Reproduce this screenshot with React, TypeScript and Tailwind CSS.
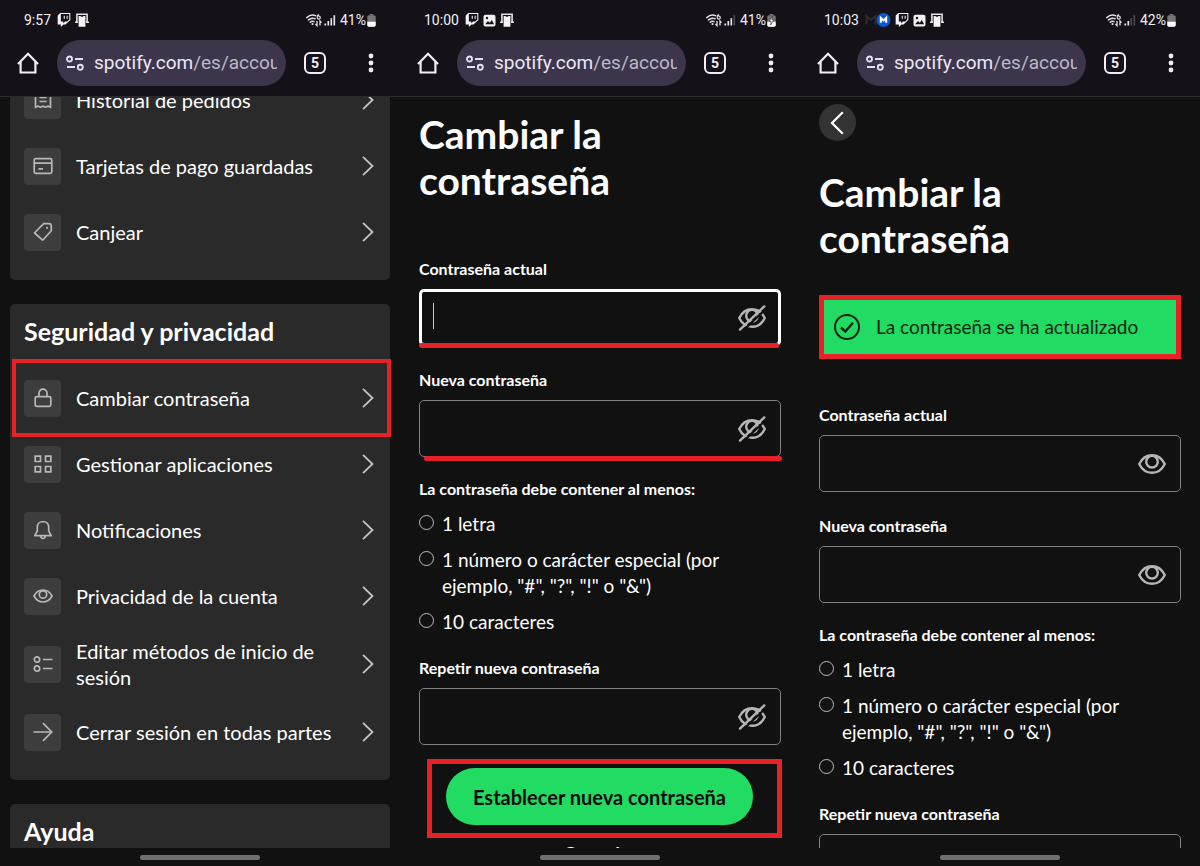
import { useId } from "react";
import type { ReactNode } from "react";
import { FaTwitch } from "react-icons/fa6";

/* ---------- status bar ---------- */

function FrameIcon() {
  return (
    <svg viewBox="0 0 14 14" className="h-3.5 w-3.5" aria-hidden="true">
      <path d="M1.900 9.500V1.200h10.200v8.300M0 9.200h3M11 9.200h3" fill="none" stroke="#e4e2e8" strokeWidth="1.600" />
      <path d="M3.600 3h1.800c.3 1 2.900 1 3.200 0h1.800v10.800H3.600z" fill="#f6f4f8" />
    </svg>
  );
}

function PictureIcon() {
  return (
    <svg viewBox="0 0 13 13" className="h-[13px] w-[13px]" aria-hidden="true">
      <rect x=".5" y=".8" width="12" height="11.600" rx="2" fill="#f2f0f4" />
      <path d="M2.200 10.200 5 6.900l1.800 1.800 2-2.600 2.300 4.100z" fill="#141118" />
      <circle cx="4" cy="4" r="1.200" fill="#141118" />
    </svg>
  );
}

function SignalIcons({ bars }: { bars: number }) {
  return (
    <svg viewBox="0 0 30 14" className="h-3.5 w-[30px]" fill="none" aria-hidden="true">
      <g stroke="#e4e2e8" strokeWidth="1.500" strokeLinecap="round">
        <path d="M.800 4.600C3.600 1.900 7.300 1.600 9.600 2.600" />
        <path d="M2.400 7C4.400 5.200 7 4.900 9 5.700" />
        <path d="M4.200 9.200C5.300 8.200 6.800 8 8 8.600" />
      </g>
      <circle cx="6.500" cy="11" r="1.100" fill="#e4e2e8" />
      <path d="M13 1.600c-1.400.2-2 1.300-1.700 2.700a1.500 1.500 0 1 0 .9-1.100" stroke="#e4e2e8" strokeWidth="1.200" />
      <path d="M11 8v4.600l-1.500-1.600M14 12.600V8l1.500 1.600" stroke="#e4e2e8" strokeWidth="1.300" />
      <g strokeWidth="1.700">
        <path d="M19.300 12.500v-2" stroke="#e4e2e8" />
        <path d="M22.300 12.500V8" stroke="#e4e2e8" />
        <path d="M25.300 12.500V5.200" stroke={bars > 2 ? "#e4e2e8" : "#4a4750"} />
        <path d="M28.300 12.500V2.200" stroke={bars > 3 ? "#e4e2e8" : "#4a4750"} />
      </g>
    </svg>
  );
}

function Battery({ charging }: { charging: boolean }) {
  return (
    <svg viewBox="0 0 9 13" className="h-[13px] w-[9px]" aria-hidden="true">
      <path d="M2.800 0h3.400v1.400H2.800z" fill="#77747c" />
      <rect x=".3" y="1.200" width="8.400" height="11.500" rx="1.600" fill="#77747c" />
      <path d="M.3 7.700h8.400v3.400c0 .9-.7 1.600-1.600 1.600H1.900c-.9 0-1.600-.7-1.600-1.600z" fill="#fff" />
      {charging && <path d="M5.200 2.200 2.200 7.400h1.900l-.5 3.600 3.200-5.200H4.900z" fill="#fff" stroke="#2a2730" strokeWidth=".6" />}
    </svg>
  );
}

function MailIcon() {
  return (
    <svg viewBox="0 0 26 14" className="h-3.5 w-[26px]" aria-hidden="true">
      <path d="M1.500 11.500V3l4.500 4 4.500-4v8.500" fill="none" stroke="#2e2a34" strokeWidth="2" />
      <circle cx="18.500" cy="7" r="7" fill="#0b57d8" />
      <path d="M15.800 9.800V4.900l2.700 2.500 2.700-2.500v4.900" fill="none" stroke="#fff" strokeWidth="2" />
    </svg>
  );
}

/* ---------- browser toolbar ---------- */

function HomeIcon() {
  return (
    <svg viewBox="0 0 22 22" className="h-[22px] w-[22px]" fill="none" stroke="#f1eef5" strokeWidth="2.200" aria-hidden="true">
      <path d="M1 12 11 1.800 21 12" />
      <path d="M3.600 9.700v10.800h14.800V9.700" />
    </svg>
  );
}

function TuneIcon() {
  return (
    <svg viewBox="0 0 18 16" className="h-4 w-[18px] shrink-0" fill="none" stroke="#e4dfee" strokeWidth="1.900" aria-hidden="true">
      <circle cx="3.500" cy="4" r="2.500" />
      <path d="M9 4h8M1 12h8" />
      <circle cx="14.300" cy="12.200" r="2.500" />
    </svg>
  );
}

type PhoneProps = {
  time: string;
  battery: string;
  bars: number;
  charging?: boolean;
  notifications: ReactNode;
  children: ReactNode;
};

function Phone({ time, battery, bars, charging = false, notifications, children }: PhoneProps) {
  return (
    <section className="flex h-full min-w-0 flex-1 flex-col bg-[#111111]">
      <header className="shrink-0 border-b border-[#2c2a30] bg-[#141118] pb-2.5">
        <div className="flex h-10 items-center justify-between px-6 font-[Roboto,sans-serif] text-sm text-[#f2f0f4]">
          <div className="flex items-center gap-1">
            <span className="mr-0.5">{time}</span>
            {notifications}
          </div>
          <div className="flex items-center gap-1">
            <SignalIcons bars={bars} />
            <span className="flex items-center gap-px">
              {battery}
              <Battery charging={charging} />
            </span>
          </div>
        </div>
        <div className="flex items-center pr-[26px] pl-[17px]">
          <button type="button" aria-label="Inicio">
            <HomeIcon />
          </button>
          <button
            type="button"
            className="ml-[18px] flex h-[46px] min-w-0 flex-1 items-center gap-2.5 rounded-full bg-[#3d364b] pr-[9px] pl-[9px] text-left"
          >
            <TuneIcon />
            <span className="min-w-0 flex-1 overflow-hidden font-[Roboto,sans-serif] text-[19px] whitespace-nowrap text-[#ece7f5]">
              spotify.com<span className="text-[#bdb6ca]">/es/accou</span>
            </span>
          </button>
          <button
            type="button"
            aria-label="Pestañas"
            className="ml-[18px] flex h-[22px] w-[22px] items-center justify-center rounded-md border-2 border-[#f1eef5] font-[Roboto,sans-serif] text-sm font-bold text-[#f1eef5]"
          >
            5
          </button>
          <button type="button" aria-label="Más opciones" className="ml-[42px]">
            <svg viewBox="0 0 6 20" className="h-5 w-1.5" fill="#f1eef5" aria-hidden="true">
              <circle cx="3" cy="3" r="2.400" />
              <circle cx="3" cy="10" r="2.400" />
              <circle cx="3" cy="17" r="2.400" />
            </svg>
          </button>
        </div>
      </header>
      <main className="min-h-0 flex-1 overflow-hidden text-white">{children}</main>
      <footer className="flex h-[18px] shrink-0 items-center justify-center">
        <span className="h-[5px] w-[120px] rounded-full bg-[#6e6e6e]" />
      </footer>
    </section>
  );
}

/* ---------- account settings list ---------- */

function TileIcon({ children }: { children: ReactNode }) {
  return (
    <svg viewBox="0 0 20 20" className="h-5 w-5" fill="none" stroke="#b8b8b8" strokeWidth="1.700" aria-hidden="true">
      {children}
    </svg>
  );
}

const receipt = (
  <TileIcon>
    <path d="M2.500 1.200h15v16l-2.500-1-2.500 1-2.500-1-2.500 1-2.500-1-2.500 1zM6.500 7.500h7M6.500 11.500h7" />
  </TileIcon>
);
const card = (
  <TileIcon>
    <rect x="1.200" y="2.700" width="17.600" height="14.600" rx="1.500" />
    <path d="M1 7.200h18M5.500 12.800h4.500" />
  </TileIcon>
);
const tag = (
  <TileIcon>
    <path d="M1.500 11 10.600 1.700h5.200a2.500 2.500 0 0 1 2.500 2.500v4.500L9.700 18.200z" strokeLinejoin="round" />
    <circle cx="14" cy="5.800" r="1.100" fill="#b8b8b8" stroke="none" />
  </TileIcon>
);
const lock = (
  <TileIcon>
    <rect x="2.200" y="8.700" width="15.600" height="9.600" rx="1.500" />
    <path d="M6 8.500V5.200a4 4 0 0 1 8 0v3.300" />
  </TileIcon>
);
const grid = (
  <TileIcon>
    <path d="M2.200 2.200h5.300v5.300H2.200zM12.500 2.200h5.300v5.300h-5.300zM2.200 12.500h5.300v5.300H2.200zM12.500 12.500h5.300v5.300h-5.300z" />
  </TileIcon>
);
const bell = (
  <TileIcon>
    <path d="M10 1.500c-3.400 0-5.700 2.500-5.700 5.800v3.500L1.800 15.700h16.400l-2.500-4.900V7.300c0-3.300-2.300-5.800-5.700-5.800z" strokeLinejoin="round" />
    <path d="M7.700 16c.2 1.600 1 2.500 2.300 2.500s2.100-.9 2.300-2.500" />
  </TileIcon>
);
const eye = (
  <TileIcon>
    <path d="M1 10c2-3.800 5.200-6 9-6s7 2.200 9 6c-2 3.800-5.200 6-9 6s-7-2.200-9-6z" />
    <circle cx="10" cy="8.500" r="3.700" />
  </TileIcon>
);
const list = (
  <TileIcon>
    <circle cx="4" cy="5.500" r="2.700" />
    <circle cx="4" cy="14.500" r="2.700" />
    <path d="M10 5.500h9.500M10 14.500h9.500" />
  </TileIcon>
);
const arrow = (
  <TileIcon>
    <path d="M.5 10h18M10 1.200 18.700 10 10 18.800" />
  </TileIcon>
);

function Row({ icon, label, marked = false }: { icon: ReactNode; label: string; marked?: boolean }) {
  return (
    <li className="relative">
      <a href="#" className="flex min-h-[66px] items-center gap-[15px] py-[9px] pr-4 pl-3.5">
        <span className="flex h-[37px] w-[37px] shrink-0 items-center justify-center rounded-[4px] bg-[#3d3d3d]">
          {icon}
        </span>
        <span className="flex-1 text-xl leading-[26px]">{label}</span>
        <svg viewBox="0 0 12 20" className="-ml-2 h-5 w-3 shrink-0" fill="none" stroke="#c4c4c4" strokeWidth="1.800" aria-hidden="true">
          <path d="m1 .800 9.500 9.200L1 19.200" />
        </svg>
      </a>
      {marked && <span className="absolute -inset-y-1.5 -right-px left-0.5 border-4 border-[#e62128]" />}
    </li>
  );
}

function CardTitle({ children }: { children: ReactNode }) {
  return <h2 className="px-3.5 pt-[11px] pb-[18px] text-[25px] leading-8 font-bold">{children}</h2>;
}

function AccountPage() {
  return (
    <div className="flex flex-col gap-6 px-2.5">
      <ul className="-mt-[30px] rounded-[5px] bg-[#2a2a2a] pb-[15px]">
        <Row icon={receipt} label="Historial de pedidos" />
        <Row icon={card} label="Tarjetas de pago guardadas" />
        <Row icon={tag} label="Canjear" />
      </ul>
      <div className="rounded-[5px] bg-[#2a2a2a] pb-[15px]">
        <CardTitle>Seguridad y privacidad</CardTitle>
        <ul>
          <Row icon={lock} label="Cambiar contraseña" marked />
          <Row icon={grid} label="Gestionar aplicaciones" />
          <Row icon={bell} label="Notificaciones" />
          <Row icon={eye} label="Privacidad de la cuenta" />
          <Row icon={list} label="Editar métodos de inicio de sesión" />
          <Row icon={arrow} label="Cerrar sesión en todas partes" />
        </ul>
      </div>
      <div className="rounded-[5px] bg-[#2a2a2a] pb-[15px]">
        <CardTitle>Ayuda</CardTitle>
      </div>
    </div>
  );
}

/* ---------- change password form ---------- */

function EyeGlyph({ off }: { off: boolean }) {
  return (
    <svg viewBox="0 0 28 26" className="h-[26px] w-7" fill="none" stroke="#b5b5b5" strokeWidth="2.400" aria-hidden="true">
      <path d="M1.200 13C4 7.400 8.500 4.200 14 4.200S24 7.400 26.800 13C24 18.600 19.500 21.800 14 21.800S4 18.600 1.200 13z" />
      <circle cx="14" cy="10.700" r="5.800" />
      {off && (
        <>
          <path d="M4.300 26.300 29 3" stroke="#111111" strokeWidth="2.200" />
          <path d="M2 24.600 26.300 1.400" strokeLinecap="round" />
        </>
      )}
    </svg>
  );
}

type FieldProps = {
  label: string;
  hidden: boolean;
  focused?: boolean;
  underline?: "left" | "right";
};

function Field({ label, hidden, focused = false, underline }: FieldProps) {
  const id = useId();
  return (
    <div>
      <label htmlFor={id} className="block text-base leading-5 font-bold">
        {label}
      </label>
      <div className="relative mt-2.5">
        <input
          id={id}
          type="password"
          className={
            focused
              ? "block h-[57px] w-full rounded-[5px] border-[3px] border-white bg-[#111111] pr-14 pl-3 outline-none"
              : "block h-[57px] w-full rounded-[5px] border border-[#808080] bg-[#111111] pr-14 pl-3.5 outline-none"
          }
        />
        {focused && <span className="absolute top-3.5 left-3.5 h-[26px] w-px bg-[#c8c8c8]" />}
        <button
          type="button"
          aria-label={hidden ? "Mostrar contraseña" : "Ocultar contraseña"}
          className="absolute inset-y-0 right-[15px] flex items-center"
        >
          <EyeGlyph off={hidden} />
        </button>
        {underline === "left" && <span className="absolute right-0.5 -bottom-0.5 left-0 h-[5px] rounded-full bg-[#e62128]" />}
        {underline === "right" && <span className="absolute -right-px -bottom-1 left-[5px] h-[5px] rounded-full bg-[#e62128]" />}
      </div>
    </div>
  );
}

function Requirement({ children }: { children: ReactNode }) {
  return (
    <li className="flex items-start gap-2">
      <span className="mt-1 h-[15px] w-[15px] shrink-0 rounded-full border border-[#bcbcbc]" />
      <span className="max-w-[300px] text-[19px] leading-[26px]">{children}</span>
    </li>
  );
}

function PageTitle() {
  return <h1 className="max-w-[280px] text-[39px] leading-[46px] font-bold">Cambiar la contraseña</h1>;
}

function PasswordFields({ hidden, annotated = false }: { hidden: boolean; annotated?: boolean }) {
  return (
    <>
      <Field label="Contraseña actual" hidden={hidden} focused={annotated} underline={annotated ? "left" : undefined} />
      <div className="mt-6">
        <Field label="Nueva contraseña" hidden={hidden} underline={annotated ? "right" : undefined} />
      </div>
      <p className="mt-[22px] text-base leading-5 font-bold">La contraseña debe contener al menos:</p>
      <ul className="mt-3 mb-[23px] flex flex-col gap-2.5">
        <Requirement>1 letra</Requirement>
        <Requirement>1 número o carácter especial (por ejemplo, "#", "?", "!" o "&amp;")</Requirement>
        <Requirement>10 caracteres</Requirement>
      </ul>
      <Field label="Repetir nueva contraseña" hidden={hidden} />
    </>
  );
}

function FormPage() {
  return (
    <form className="px-[19px] pt-3.5">
      <PageTitle />
      <div className="mt-14">
        <PasswordFields hidden annotated />
      </div>
      <div className="relative mt-3.5 -mr-px ml-2 flex h-[79px] justify-center border-[5px] border-[#e62128] pt-1 pr-2.5">
        <button type="button" className="h-[57px] rounded-full bg-[#22db62] px-[27px] text-xl font-bold text-[#0c0c0c]">
          Establecer nueva contraseña
        </button>
      </div>
      <a href="#" className="mt-1 block text-center text-[19px] leading-6 font-bold">
        Cancelar
      </a>
    </form>
  );
}

function DonePage() {
  return (
    <form className="px-[19px] pt-[7px]">
      <button type="button" aria-label="Volver" className="flex h-[37px] w-[37px] items-center justify-center rounded-full bg-[#333333]">
        <svg viewBox="0 0 14 24" className="mr-0.5 h-6 w-3.5" fill="none" stroke="#ffffff" strokeWidth="2.200" aria-hidden="true">
          <path d="M12.800 1.300 2 12l10.800 10.700" />
        </svg>
      </button>
      <div className="mt-7">
        <PageTitle />
      </div>
      <div role="status" className="mt-[34px] flex h-16 items-center gap-4 border-[5px] border-[#e62128] bg-[#22db62] px-2.5 text-[#0a2412]">
        <svg viewBox="0 0 26 26" className="h-[26px] w-[26px] shrink-0" fill="none" stroke="currentColor" strokeWidth="2" aria-hidden="true">
          <circle cx="13" cy="13" r="12" />
          <path d="m7 13.500 4.300 4L19 8.700" strokeWidth="2.400" />
        </svg>
        <span className="text-[19px]">La contraseña se ha actualizado</span>
      </div>
      <div className="mt-[46px]">
        <PasswordFields hidden={false} />
      </div>
    </form>
  );
}

export default function App() {
  return (
    <div className="flex h-screen overflow-hidden bg-[#111111] font-[Lato,sans-serif]">
      <Phone
        time="9:57"
        battery="41%"
        bars={4}
        notifications={
          <>
            <FaTwitch className="h-3.5 w-3.5" />
            <FrameIcon />
          </>
        }
      >
        <AccountPage />
      </Phone>
      <Phone
        time="10:00"
        battery="41%"
        bars={3}
        charging
        notifications={
          <>
            <FaTwitch className="h-3.5 w-3.5" />
            <PictureIcon />
            <FrameIcon />
          </>
        }
      >
        <FormPage />
      </Phone>
      <Phone
        time="10:03"
        battery="42%"
        bars={2}
        notifications={
          <>
            <MailIcon />
            <FaTwitch className="h-3.5 w-3.5" />
            <PictureIcon />
            <FrameIcon />
          </>
        }
      >
        <DonePage />
      </Phone>
    </div>
  );
}
